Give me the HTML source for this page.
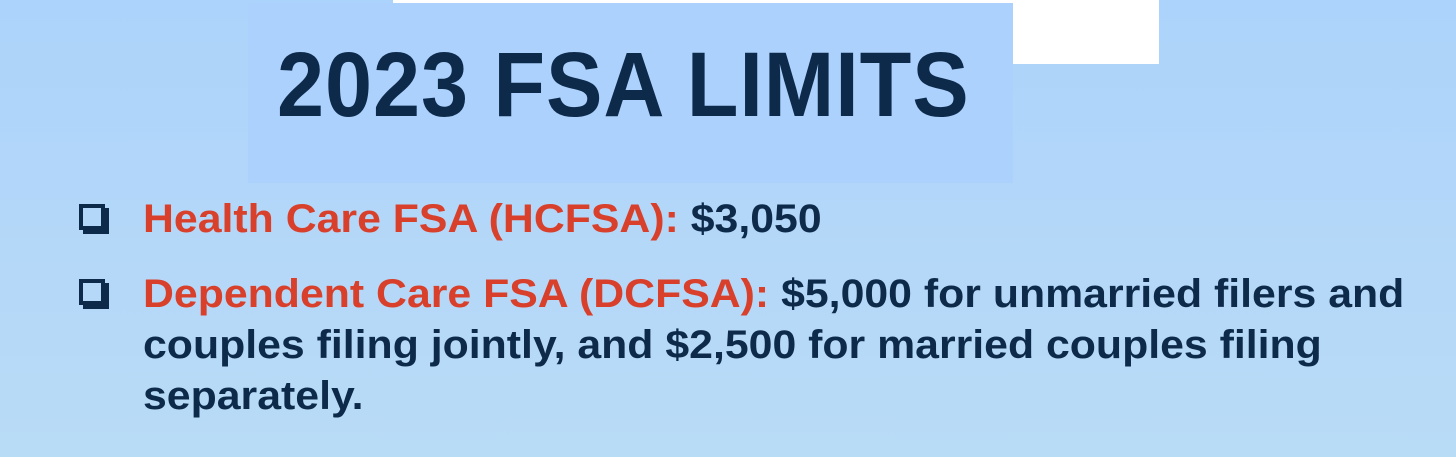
<!DOCTYPE html>
<html><head><style>
html,body{margin:0;padding:0}
body{width:1456px;height:457px;overflow:hidden;background:linear-gradient(#acd3fb,#b5d8f8 60%,#b8dbf6);position:relative;font-family:"Liberation Sans",sans-serif}
.box{position:absolute;left:248px;top:3px;width:765px;height:180px;background:#abd1fc}
.w1{position:absolute;left:393px;top:0;width:620px;height:3px;background:#fff}
.w2{position:absolute;left:1013px;top:0;width:146px;height:64px;background:#fff}
.title{position:absolute;left:277px;top:33px;font-size:92px;font-weight:bold;color:#0d2a4b;white-space:nowrap;transform:scaleX(0.92);transform-origin:left top;letter-spacing:1px}
.txt{position:absolute;left:143px;font-size:40px;font-weight:bold;color:#0e2a4a;white-space:nowrap;transform:scaleX(1.07);transform-origin:left top;line-height:51px}
.r{color:#d8402b}
.cb{position:absolute;left:79px;width:26px;height:26px;border:4px solid #0e2a4a;box-sizing:border-box;box-shadow:4px 4px 0 #0e2a4a}
</style></head><body>
<div class="box"></div><div class="w1"></div><div class="w2"></div>
<div class="title">2023 FSA LIMITS</div>
<div class="cb" style="top:204px"></div>
<div class="cb" style="top:279px"></div>
<div class="txt" style="top:194px"><span class="r">Health Care FSA (HCFSA):</span> $3,050</div>
<div class="txt" style="top:269px"><span class="r">Dependent Care FSA (DCFSA):</span> $5,000 for unmarried filers and<br>couples filing jointly, and $2,500 for married couples filing<br>separately.</div>
</body></html>
